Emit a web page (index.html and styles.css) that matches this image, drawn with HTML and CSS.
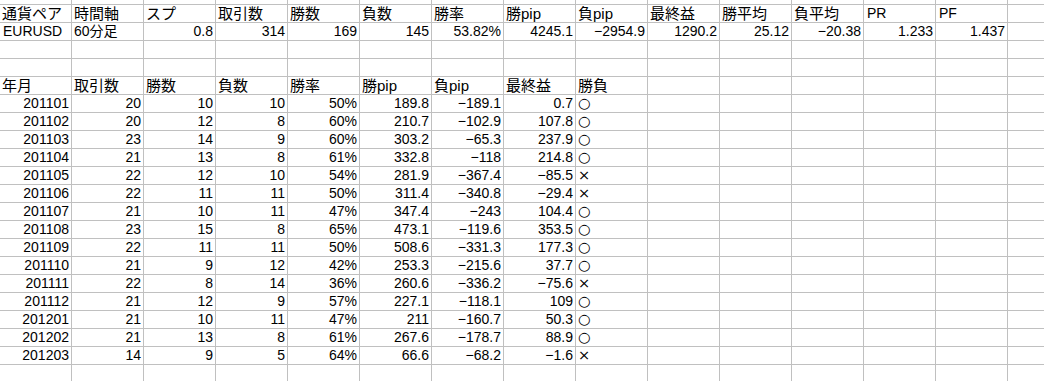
FILE: index.html
```html
<!DOCTYPE html>
<html lang="ja">
<head>
<meta charset="utf-8">
<title>EURUSD 60分足</title>
<link rel="stylesheet" href="styles.css">
</head>
<body>
<div class="sheet">
<table class="grid">
<colgroup>
<col><col><col><col><col><col><col><col><col><col><col><col><col><col><col>
</colgroup>
<tbody>
<tr class="cut"><td></td><td></td><td></td><td></td><td></td><td></td><td></td><td></td><td></td><td></td><td></td><td></td><td></td><td></td><td></td></tr>
<tr class="head"><td>通貨ペア</td><td>時間軸</td><td>スプ</td><td>取引数</td><td>勝数</td><td>負数</td><td>勝率</td><td>勝pip</td><td>負pip</td><td>最終益</td><td>勝平均</td><td>負平均</td><td class="l">PR</td><td class="l">PF</td><td></td></tr>
<tr><td>EURUSD</td><td class="j">60分足</td><td class="n">0.8</td><td class="n">314</td><td class="n">169</td><td class="n">145</td><td class="n">53.82%</td><td class="n">4245.1</td><td class="n">−2954.9</td><td class="n">1290.2</td><td class="n">25.12</td><td class="n">−20.38</td><td class="n">1.233</td><td class="n">1.437</td><td></td></tr>
<tr><td></td><td></td><td></td><td></td><td></td><td></td><td></td><td></td><td></td><td></td><td></td><td></td><td></td><td></td><td></td></tr>
<tr><td></td><td></td><td></td><td></td><td></td><td></td><td></td><td></td><td></td><td></td><td></td><td></td><td></td><td></td><td></td></tr>
<tr class="head"><td>年月</td><td>取引数</td><td>勝数</td><td>負数</td><td>勝率</td><td>勝pip</td><td>負pip</td><td>最終益</td><td>勝負</td><td></td><td></td><td></td><td></td><td></td><td></td></tr>
<tr><td class="n">201101</td><td class="n">20</td><td class="n">10</td><td class="n">10</td><td class="n">50%</td><td class="n">189.8</td><td class="n">−189.1</td><td class="n">0.7</td><td class="m">○</td><td></td><td></td><td></td><td></td><td></td><td></td></tr>
<tr><td class="n">201102</td><td class="n">20</td><td class="n">12</td><td class="n">8</td><td class="n">60%</td><td class="n">210.7</td><td class="n">−102.9</td><td class="n">107.8</td><td class="m">○</td><td></td><td></td><td></td><td></td><td></td><td></td></tr>
<tr><td class="n">201103</td><td class="n">23</td><td class="n">14</td><td class="n">9</td><td class="n">60%</td><td class="n">303.2</td><td class="n">−65.3</td><td class="n">237.9</td><td class="m">○</td><td></td><td></td><td></td><td></td><td></td><td></td></tr>
<tr><td class="n">201104</td><td class="n">21</td><td class="n">13</td><td class="n">8</td><td class="n">61%</td><td class="n">332.8</td><td class="n">−118</td><td class="n">214.8</td><td class="m">○</td><td></td><td></td><td></td><td></td><td></td><td></td></tr>
<tr><td class="n">201105</td><td class="n">22</td><td class="n">12</td><td class="n">10</td><td class="n">54%</td><td class="n">281.9</td><td class="n">−367.4</td><td class="n">−85.5</td><td class="m">×</td><td></td><td></td><td></td><td></td><td></td><td></td></tr>
<tr><td class="n">201106</td><td class="n">22</td><td class="n">11</td><td class="n">11</td><td class="n">50%</td><td class="n">311.4</td><td class="n">−340.8</td><td class="n">−29.4</td><td class="m">×</td><td></td><td></td><td></td><td></td><td></td><td></td></tr>
<tr><td class="n">201107</td><td class="n">21</td><td class="n">10</td><td class="n">11</td><td class="n">47%</td><td class="n">347.4</td><td class="n">−243</td><td class="n">104.4</td><td class="m">○</td><td></td><td></td><td></td><td></td><td></td><td></td></tr>
<tr><td class="n">201108</td><td class="n">23</td><td class="n">15</td><td class="n">8</td><td class="n">65%</td><td class="n">473.1</td><td class="n">−119.6</td><td class="n">353.5</td><td class="m">○</td><td></td><td></td><td></td><td></td><td></td><td></td></tr>
<tr><td class="n">201109</td><td class="n">22</td><td class="n">11</td><td class="n">11</td><td class="n">50%</td><td class="n">508.6</td><td class="n">−331.3</td><td class="n">177.3</td><td class="m">○</td><td></td><td></td><td></td><td></td><td></td><td></td></tr>
<tr><td class="n">201110</td><td class="n">21</td><td class="n">9</td><td class="n">12</td><td class="n">42%</td><td class="n">253.3</td><td class="n">−215.6</td><td class="n">37.7</td><td class="m">○</td><td></td><td></td><td></td><td></td><td></td><td></td></tr>
<tr><td class="n">201111</td><td class="n">22</td><td class="n">8</td><td class="n">14</td><td class="n">36%</td><td class="n">260.6</td><td class="n">−336.2</td><td class="n">−75.6</td><td class="m">×</td><td></td><td></td><td></td><td></td><td></td><td></td></tr>
<tr><td class="n">201112</td><td class="n">21</td><td class="n">12</td><td class="n">9</td><td class="n">57%</td><td class="n">227.1</td><td class="n">−118.1</td><td class="n">109</td><td class="m">○</td><td></td><td></td><td></td><td></td><td></td><td></td></tr>
<tr><td class="n">201201</td><td class="n">21</td><td class="n">10</td><td class="n">11</td><td class="n">47%</td><td class="n">211</td><td class="n">−160.7</td><td class="n">50.3</td><td class="m">○</td><td></td><td></td><td></td><td></td><td></td><td></td></tr>
<tr><td class="n">201202</td><td class="n">21</td><td class="n">13</td><td class="n">8</td><td class="n">61%</td><td class="n">267.6</td><td class="n">−178.7</td><td class="n">88.9</td><td class="m">○</td><td></td><td></td><td></td><td></td><td></td><td></td></tr>
<tr><td class="n">201203</td><td class="n">14</td><td class="n">9</td><td class="n">5</td><td class="n">64%</td><td class="n">66.6</td><td class="n">−68.2</td><td class="n">−1.6</td><td class="m">×</td><td></td><td></td><td></td><td></td><td></td><td></td></tr>
<tr><td></td><td></td><td></td><td></td><td></td><td></td><td></td><td></td><td></td><td></td><td></td><td></td><td></td><td></td><td></td></tr>
</tbody>
</table>
</div>
</body>
</html>
```

FILE: styles.css
```css
html, body {
  margin: 0;
  padding: 0;
  background: #ffffff;
}

.sheet {
  width: 1044px;
  height: 381px;
  overflow: hidden;
}

.grid {
  table-layout: fixed;
  border-collapse: separate;
  border-spacing: 0;
  width: 1080px;
  font-family: "Liberation Sans", "Noto Sans CJK JP", sans-serif;
  font-size: 14px;
  color: #000000;
}

.grid col {
  width: 72px;
}

.grid td {
  box-sizing: border-box;
  width: 72px;
  height: 18px;
  padding: 0 2px 1px 3px;
  border-right: 1px solid #c0c0c0;
  border-bottom: 1px solid #c0c0c0;
  line-height: 15px;
  vertical-align: bottom;
  white-space: nowrap;
  overflow: hidden;
  text-align: left;
}

.grid tr.cut td {
  height: 5px;
  padding: 0;
  line-height: 0;
}

.grid tr.head td {
  font-size: 15px;
  padding-left: 2px;
}

.grid tr.head td.l {
  font-size: 14px;
  padding-left: 3px;
}

.grid td.j {
  padding-left: 2px;
}

.grid td.n {
  text-align: right;
}

.grid td.m {
  font-family: "DejaVu Sans", sans-serif;
  font-size: 14.5px;
  line-height: 17px;
  padding: 0 2px 0 2px;
  vertical-align: middle;
}
```
